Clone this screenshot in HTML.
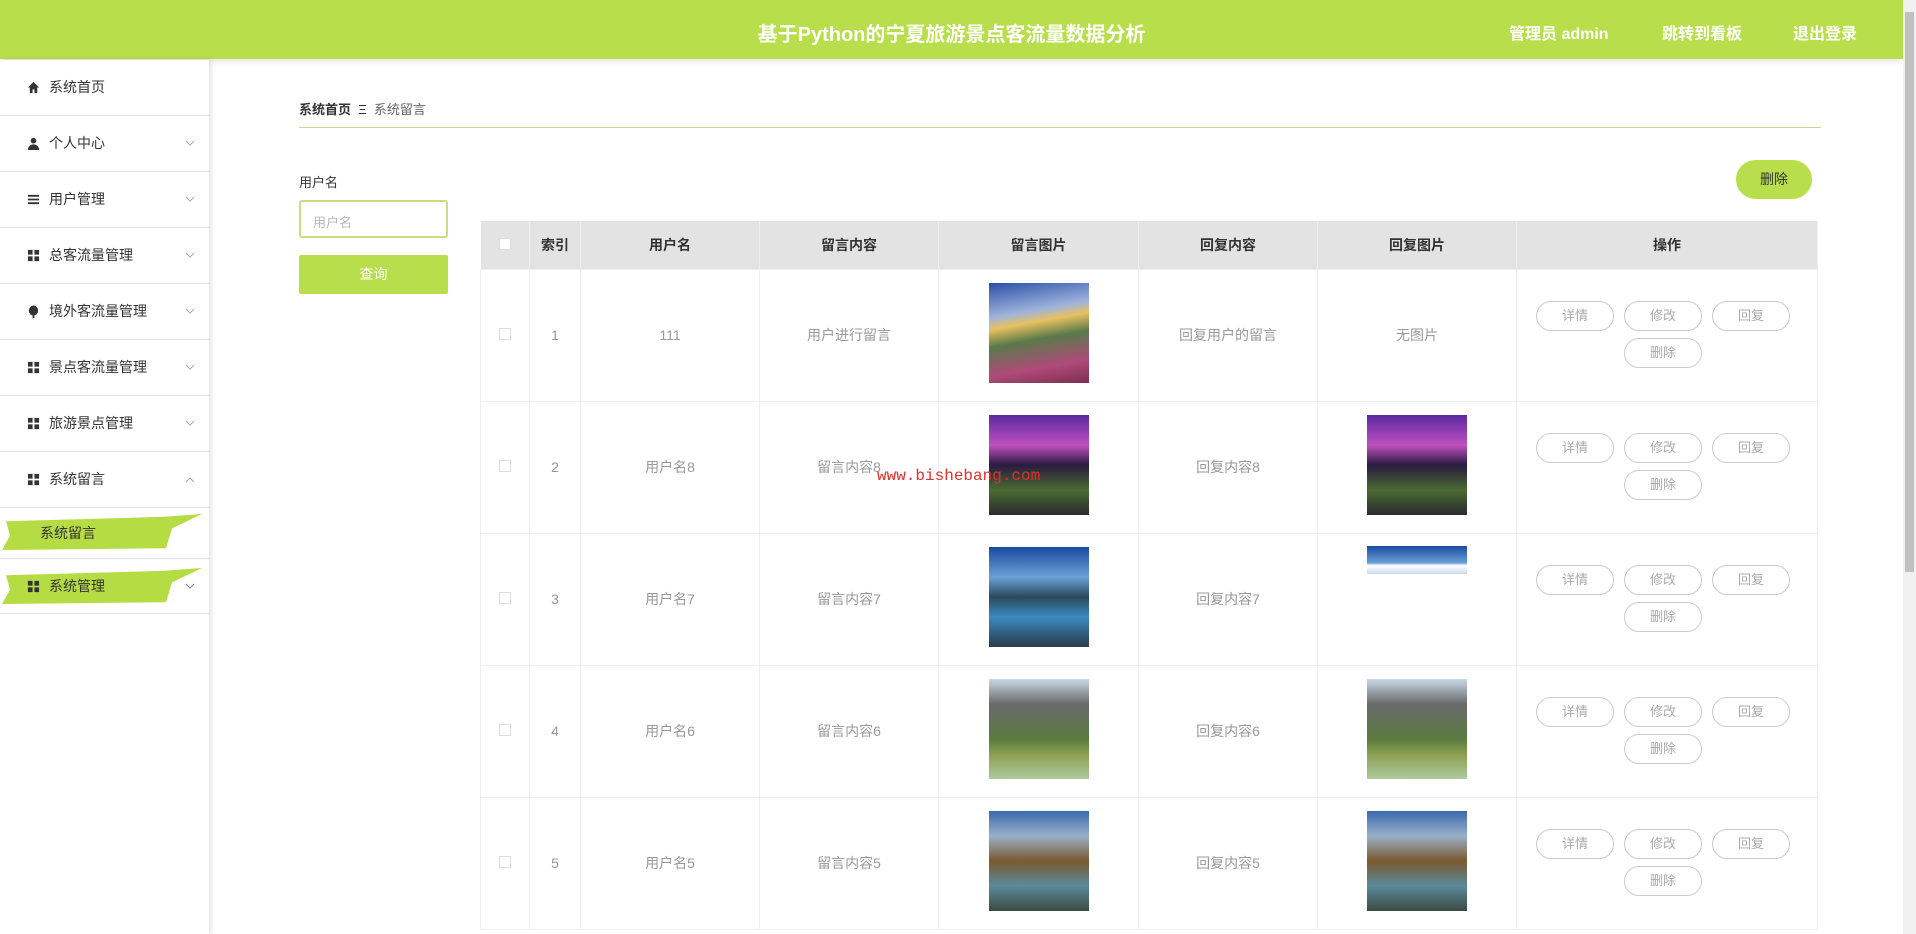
<!DOCTYPE html>
<html><head><meta charset="utf-8"><style>
*{margin:0;padding:0;box-sizing:border-box}
body{width:1916px;height:934px;overflow:hidden;background:#fff;font-family:"Liberation Sans","Noto Sans CJK SC",sans-serif;position:relative;color:#333}
.hd{position:absolute;left:0;top:0;width:1903px;height:59px;background:#b8df4b;box-shadow:0 2px 6px rgba(0,0,0,.12)}
.hd .t{position:absolute;left:0;width:1903px;top:18px;text-align:center;color:#fff;font-size:20px;font-weight:bold}
.hd .r{position:absolute;top:20px;color:#fff;font-size:16px;font-weight:bold}
.sb{position:absolute;right:0;top:0;width:13px;height:934px;background:#f0f0f0}
.sb i{position:absolute;left:2px;top:12px;width:9px;height:560px;background:#c1c1c1}
.side{position:absolute;left:0;top:60px;width:209px;height:874px;background:#fff;box-shadow:2px 0 5px rgba(0,0,0,.12)}
.it{position:relative;height:56px;border-bottom:1px solid #e2e2e2;font-size:14px;color:#333;line-height:55px;padding-left:49px}
.it .ic{position:absolute;left:27px;top:21px;width:13px;height:13px}
.it .ar{position:absolute;left:185px;top:24px;width:10px;height:7px}
.brush{position:absolute;left:2px;top:9px;width:200px;height:36px;background:#b5dc42;clip-path:polygon(2% 20%,80% 8%,100% 0,85% 40%,82% 95%,0 100%,4% 60%)}
.bc{position:absolute;left:299px;top:99px;font-size:13px}
.line{position:absolute;left:299px;top:127px;width:1522px;height:1px;background:#c8d590}
.lbl{position:absolute;left:299px;top:172px;font-size:13px}
.inp{position:absolute;left:299px;top:200px;width:149px;height:38px;border:2px solid #c9dc84;border-radius:3px;font-size:13px;color:#bbb;padding:10px 12px}
.btn{position:absolute;left:299px;top:255px;width:149px;height:39px;background:#b8df4b;color:#fff;font-size:14px;text-align:center;line-height:39px;border-radius:2px}
.del{position:absolute;left:1736px;top:160px;width:76px;height:39px;background:#b8df4b;border-radius:20px;text-align:center;line-height:39px;font-size:14px;color:#333}
table{position:absolute;left:480px;top:221px;border-collapse:collapse;width:1338px}
th{background:#e3e3e3;height:48px;font-size:14px;font-weight:bold;color:#333;border-right:1px solid #eee}
td{height:132px;border:1px solid #eee;text-align:center;font-size:14px;color:#999;vertical-align:middle}
.cb{display:inline-block;width:12px;height:12px;border:1px solid #ddd;background:#fff}
.img{display:inline-block;width:100px;height:100px;vertical-align:middle;margin-top:-4px}
.ops{position:relative;height:132px}
.op{position:absolute;width:78px;height:30px;border:1px solid #ccc;border-radius:15px;line-height:28px;font-size:13px;color:#aaa}
.wm{position:absolute;left:877px;top:467px;color:#e0302a;font-family:"Liberation Mono",monospace;font-size:16px}
</style></head><body>
<div class="hd"><div class="t">基于Python的宁夏旅游景点客流量数据分析</div>
<div class="r" style="left:1509px">管理员 admin</div><div class="r" style="left:1662px">跳转到看板</div><div class="r" style="left:1793px">退出登录</div></div>
<div class="sb"><i></i></div>
<div class="side">
<div class="it"><svg class="ic" viewBox="0 0 14 14"><path d="M7 1L1 7h2v6h3V9h2v4h3V7h2z" fill="#333"/></svg>系统首页</div>
<div class="it"><svg class="ic" viewBox="0 0 14 14"><circle cx="7" cy="4" r="3" fill="#333"/><path d="M1 14c0-4 3-6 6-6s6 2 6 6z" fill="#333"/></svg>个人中心<svg class="ar" viewBox="0 0 10 7"><path d="M1 1l4 4 4-4" fill="none" stroke="#aaa"/></svg></div>
<div class="it"><svg class="ic" viewBox="0 0 14 14"><path d="M1 2h12v2H1zM1 6h12v2H1zM1 10h12v2H1z" fill="#333"/></svg>用户管理<svg class="ar" viewBox="0 0 10 7"><path d="M1 1l4 4 4-4" fill="none" stroke="#aaa"/></svg></div>
<div class="it"><svg class="ic" viewBox="0 0 14 14"><path d="M1 1h5v5H1zM8 1h5v5H8zM1 8h5v5H1zM8 8h5v5H8z" fill="#333"/></svg>总客流量管理<svg class="ar" viewBox="0 0 10 7"><path d="M1 1l4 4 4-4" fill="none" stroke="#aaa"/></svg></div>
<div class="it"><svg class="ic" viewBox="0 0 14 14"><ellipse cx="7" cy="6" rx="5" ry="5.5" fill="#333"/><path d="M6 11h2v3H6z" fill="#333"/></svg>境外客流量管理<svg class="ar" viewBox="0 0 10 7"><path d="M1 1l4 4 4-4" fill="none" stroke="#aaa"/></svg></div>
<div class="it"><svg class="ic" viewBox="0 0 14 14"><path d="M1 1h5v5H1zM8 1h5v5H8zM1 8h5v5H1zM8 8h5v5H8z" fill="#333"/></svg>景点客流量管理<svg class="ar" viewBox="0 0 10 7"><path d="M1 1l4 4 4-4" fill="none" stroke="#aaa"/></svg></div>
<div class="it"><svg class="ic" viewBox="0 0 14 14"><path d="M1 1h5v5H1zM8 1h5v5H8zM1 8h5v5H1zM8 8h5v5H8z" fill="#333"/></svg>旅游景点管理<svg class="ar" viewBox="0 0 10 7"><path d="M1 1l4 4 4-4" fill="none" stroke="#aaa"/></svg></div>
<div class="it"><svg class="ic" viewBox="0 0 14 14"><path d="M1 1h5v5H1zM8 1h5v5H8zM1 8h5v5H1zM8 8h5v5H8z" fill="#333"/></svg>系统留言<svg class="ar" viewBox="0 0 10 7"><path d="M1 6l4-4 4 4" fill="none" stroke="#aaa"/></svg></div>
<div class="it" style="height:51px;line-height:51px;padding-left:40px"><div class="brush" style="top:6px"></div><span style="position:relative">系统留言</span></div>
<div class="it" style="height:55px"><div class="brush"></div><svg class="ic" viewBox="0 0 14 14"><path d="M1 1h5v5H1zM8 1h5v5H8zM1 8h5v5H1zM8 8h5v5H8z" fill="#333"/></svg><span style="position:relative">系统管理</span><svg class="ar" viewBox="0 0 10 7"><path d="M1 1l4 4 4-4" fill="none" stroke="#888"/></svg></div>
</div>
<div class="bc"><b>系统首页</b> &nbsp;Ξ&nbsp; <span style="color:#666">系统留言</span></div>
<div class="line"></div>
<div class="lbl">用户名</div>
<div class="inp">用户名</div>
<div class="btn">查询</div>
<div class="del">删除</div>
<table>
<tr><th style="width:49px"><span class="cb"></span></th><th style="width:51px">索引</th><th style="width:179px">用户名</th><th style="width:179px">留言内容</th><th style="width:200px">留言图片</th><th style="width:179px">回复内容</th><th style="width:199px">回复图片</th><th>操作</th></tr>
<tr><td><span class="cb"></span></td><td>1</td><td>111</td><td>用户进行留言</td><td><span class="img" style="background:linear-gradient(170deg,#2b4fa8 0%,#9fb4dc 30%,#e8c060 40%,#5a7a4a 55%,#b04a7a 80%,#7a3050 100%)"></span></td><td>回复用户的留言</td><td>无图片</td><td class="ops"><div class="op" style="left:19px;top:31px">详情</div><div class="op" style="left:107px;top:31px">修改</div><div class="op" style="left:195px;top:31px">回复</div><div class="op" style="left:107px;top:68px">删除</div></td></tr>
<tr><td><span class="cb"></span></td><td>2</td><td>用户名8</td><td>留言内容8</td><td><span class="img" style="background:linear-gradient(180deg,#5a2aa0 0%,#c050c0 30%,#2a1a40 50%,#4a6a30 75%,#2a2a30 100%)"></span></td><td>回复内容8</td><td><span class="img" style="background:linear-gradient(180deg,#5a2aa0 0%,#c050c0 30%,#2a1a40 50%,#4a6a30 75%,#2a2a30 100%)"></span></td><td class="ops"><div class="op" style="left:19px;top:31px">详情</div><div class="op" style="left:107px;top:31px">修改</div><div class="op" style="left:195px;top:31px">回复</div><div class="op" style="left:107px;top:68px">删除</div></td></tr>
<tr><td><span class="cb"></span></td><td>3</td><td>用户名7</td><td>留言内容7</td><td><span class="img" style="background:linear-gradient(180deg,#1a4aa0 0%,#6aa0d8 30%,#2a4a5a 50%,#3a8ac0 70%,#2a3a4a 100%)"></span></td><td>回复内容7</td><td style="vertical-align:top;padding-top:12px"><span class="img" style="height:28px;margin-top:0;background:linear-gradient(180deg,#1a4aa0,#6aa0d8 60%,#fff 70%,#cde 100%)"></span></td><td class="ops"><div class="op" style="left:19px;top:31px">详情</div><div class="op" style="left:107px;top:31px">修改</div><div class="op" style="left:195px;top:31px">回复</div><div class="op" style="left:107px;top:68px">删除</div></td></tr>
<tr><td><span class="cb"></span></td><td>4</td><td>用户名6</td><td>留言内容6</td><td><span class="img" style="background:linear-gradient(180deg,#c8d8e8 0%,#6a6a6a 25%,#5a7a40 60%,#8aa050 75%,#b0c8a0 100%)"></span></td><td>回复内容6</td><td><span class="img" style="background:linear-gradient(180deg,#c8d8e8 0%,#6a6a6a 25%,#5a7a40 60%,#8aa050 75%,#b0c8a0 100%)"></span></td><td class="ops"><div class="op" style="left:19px;top:31px">详情</div><div class="op" style="left:107px;top:31px">修改</div><div class="op" style="left:195px;top:31px">回复</div><div class="op" style="left:107px;top:68px">删除</div></td></tr>
<tr><td><span class="cb"></span></td><td>5</td><td>用户名5</td><td>留言内容5</td><td><span class="img" style="background:linear-gradient(180deg,#3a6ab0 0%,#9ab0c8 25%,#7a5a30 50%,#5a8a9a 75%,#3a4a40 100%)"></span></td><td>回复内容5</td><td><span class="img" style="background:linear-gradient(180deg,#3a6ab0 0%,#9ab0c8 25%,#7a5a30 50%,#5a8a9a 75%,#3a4a40 100%)"></span></td><td class="ops"><div class="op" style="left:19px;top:31px">详情</div><div class="op" style="left:107px;top:31px">修改</div><div class="op" style="left:195px;top:31px">回复</div><div class="op" style="left:107px;top:68px">删除</div></td></tr>
</table>
<div class="wm">www.bishebang.com</div>
</body></html>
